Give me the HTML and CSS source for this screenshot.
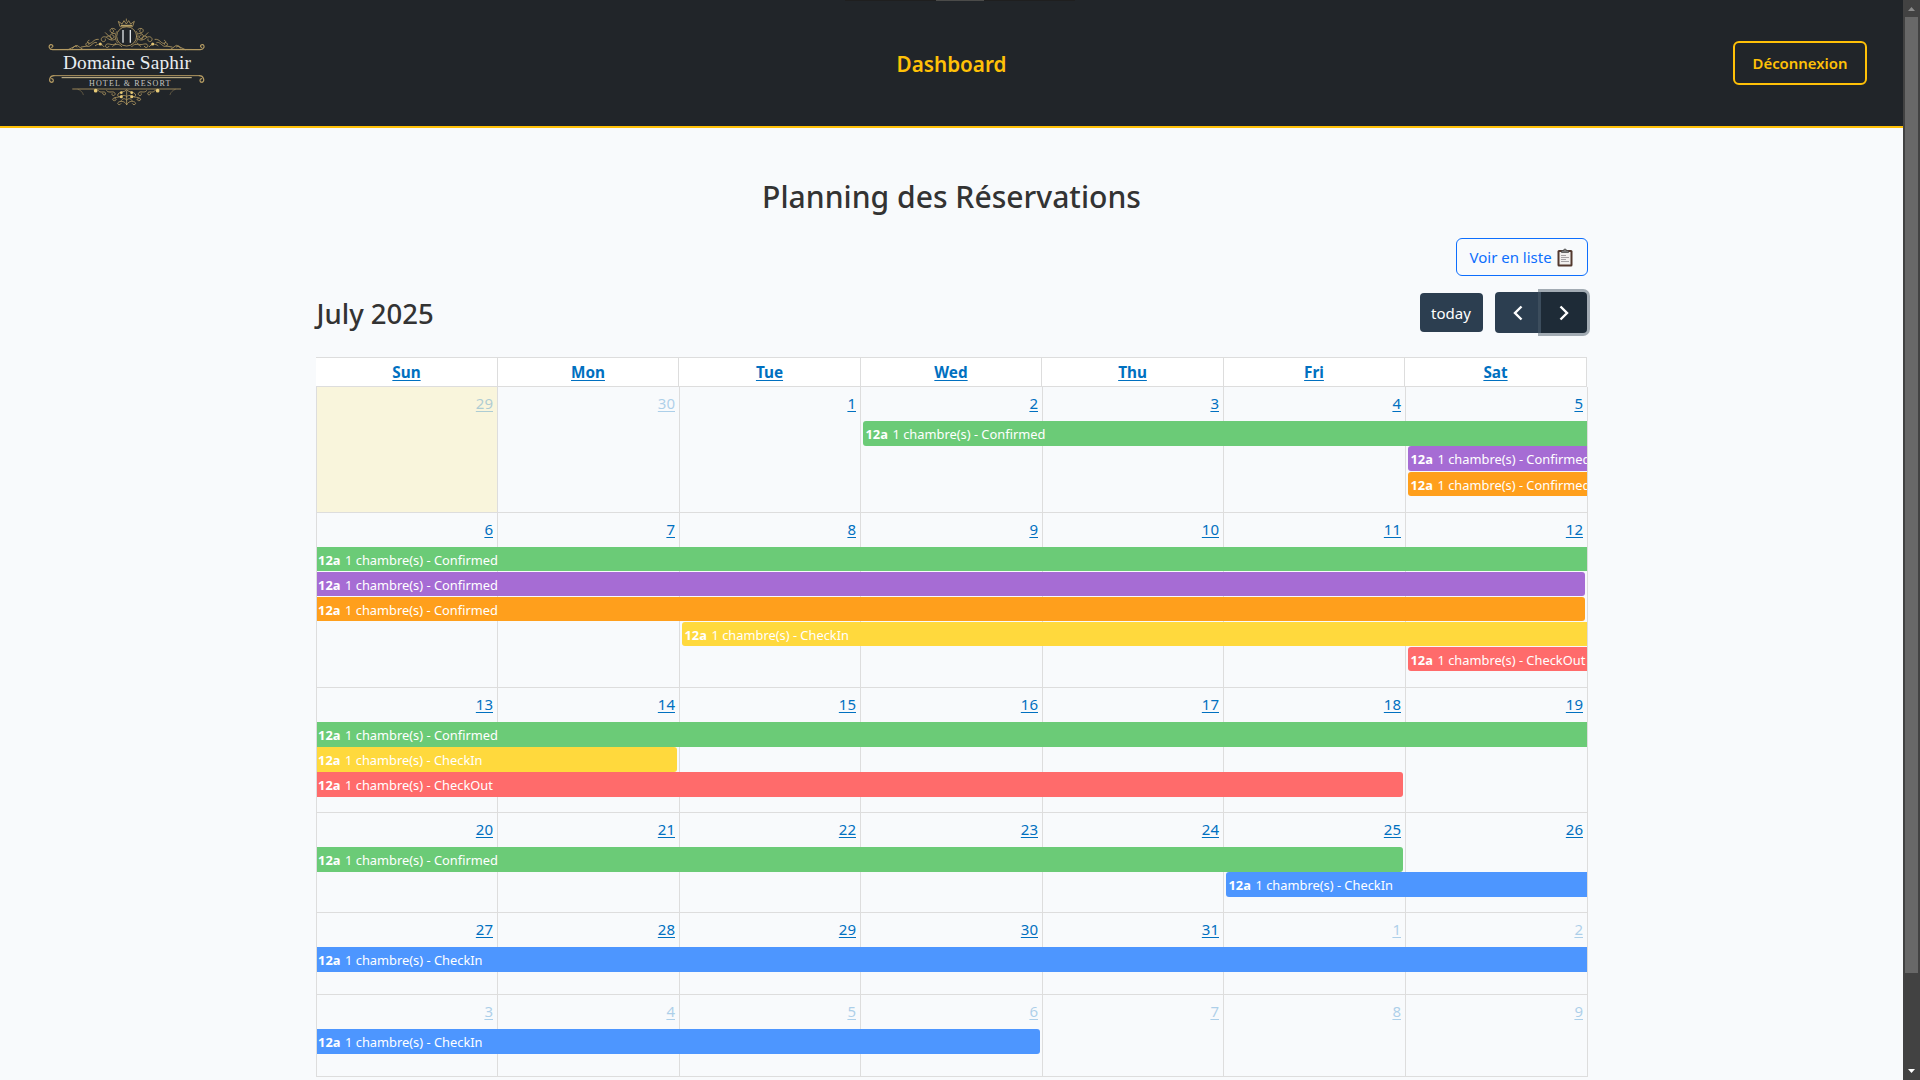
FILE: index.html
```html
<!DOCTYPE html>
<html lang="fr">
<head>
<meta charset="utf-8">
<title>Planning des Réservations</title>
<link rel="stylesheet" href="styles.css">
</head>
<body>
<div class="page">
  <header class="topbar">
    <svg class="logo" viewBox="54 54 474 270" fill="none" stroke="#b39a62" stroke-width="3" stroke-linecap="round" role="img" aria-label="Domaine Saphir">
      <!-- crown and medallion -->
      <path d="M270 79 265 64l11 8 6-10 7 10 7-10 6 10 11-8-5 15z" stroke-width="2.5"/>
      <path d="M274 76h31" stroke="#d9bd74" stroke-width="3"/>
      <path d="M289 57v6" stroke-width="2.5"/>
      <ellipse cx="290" cy="109" rx="30" ry="29" stroke-width="2.5"/>
      <path d="M261 94c-8 10-7 24 2 35M319 94c8 10 7 24-2 35" stroke-width="2"/>
      <path d="M279 90v38M301 90v38" stroke="#dfe3e6" stroke-width="4" stroke-linecap="butt"/>
      <!-- upper scrollwork -->
      <g>
        <path d="M256 88c-10-8-21 1-13 9 8 3 11-6 5-8M254 100c-14-2-19 12-9 16 9 0 9-11 2-11M226 98l10 10M230 110c8-5 16 0 14 8M257 116c-8 8-20 3-25-2-11-9-22 0-17 8 5 6 14 2 11-5" stroke-width="2.5"/>
        <path d="M258 130c-10 10-21-2-29 3-8 8 5 14 8 6M248 139c8-9 20-8 27 1M205 118c-14-2-17 12-26 12-8 0-8-8-2-9M200 128c-8-5-15 9-23 11-9 1-12-6-7-10s10 2 6 5M222 140c-6-9-18-10-26-3M172 138l-18 3" stroke-width="2.5"/>
        <circle cx="211" cy="132" r="4.500" fill="#e3c576" stroke="none"/>
        <path d="M276 148 68 149c-11 0-14-12-6-15 7-1 9 7 3 8" stroke-width="3.500"/>
        <path d="M114 149l27-13 17 12M128 145l7-8 6 4" stroke-width="2.500"/>
      </g>
      <g>
        <path d="M324 88c10-8 21 1 13 9-8 3-11-6-5-8M326 100c14-2 19 12 9 16-9 0-9-11-2-11M354 98l-10 10M350 110c-8-5-16 0-14 8M323 116c8 8 20 3 25-2 11-9 22 0 17 8-5 6-14 2-11-5" stroke-width="2.5"/>
        <path d="M322 130c10 10 21-2 29 3 8 8-5 14-8 6M332 139c-8-9-20-8-27 1M375 118c14-2 17 12 26 12 8 0 8-8 2-9M380 128c8-5 15 9 23 11 9 1 12-6 7-10s-10 2-6 5M358 140c6-9 18-10 26-3M408 138l18 3" stroke-width="2.5"/>
        <circle cx="368" cy="132" r="4.500" fill="#e3c576" stroke="none"/>
        <path d="M276 148 511 149c11 0 15-12 7-15-7-1-9 7-3 8" stroke-width="3.500"/>
        <path d="M466 149l-27-13-17 12M452 145l-7-8-6 4" stroke-width="2.500"/>
      </g>
      <text class="logo-name" x="99" y="206" textLength="384">Domaine Saphir</text>
      <!-- lower rules -->
      <path d="M72 227H508" stroke-width="3"/>
      <path d="M96 233H484" stroke="#d3c294" stroke-width="3"/>
      <path d="M72 227c-14 0-17 17-8 20 8 0 8-10 1-11M508 227c14 0 17 17 8 20-8 0-8-10-1-11" stroke-width="3.500"/>
      <text class="logo-sub" x="177" y="258" textLength="244">HOTEL &amp; RESORT</text>
      <path d="M128 267H452" stroke-width="2.500"/>
      <!-- lower scrollwork -->
      <path d="M144 268c8 3 14 8 16 16M436 268c-8 3-14 8-16 16" stroke-width="2" opacity=".6"/>
      <path d="M203 270c8 12 18 2 23 8 4 8-8 9-8 2M230 272c8 10 20-2 25 8 2 9-12 9-9 1M377 270c-8 12-18 2-23 8-4 8 8 9 8 2M350 272c-8 10-20-2-25 8-2 9 12 9 9 1" stroke-width="2.500"/>
      <path d="M290 270c-8 8-20 4-26 12-4 10 10 12 10 4M290 290c-8-10-20 2-30 2-14 0-15 11-6 10 8-2 4-8 0-6M290 314c-5-10-15-12-24-8-8 6 3 12 7 5M290 300c-7-8-14-3-17 3" stroke-width="2.500"/>
      <path d="M290 270c8 8 20 4 26 12 4 10-10 12-10 4M290 290c8-10 20 2 30 2 14 0 15 11 6 10-8-2-4-8 0-6M290 314c5-10 15-12 24-8 8 6-3 12-7 5M290 300c7-8 14-3 17 3M290 274v40" stroke-width="2.500"/>
      <g fill="#e9cc78" stroke="none"><circle cx="197" cy="272" r="5.500"/><circle cx="383" cy="272" r="5.500"/><circle cx="274" cy="278" r="4"/><circle cx="305" cy="278" r="4"/><circle cx="274" cy="290" r="4.500"/><circle cx="305" cy="290" r="4.500"/></g>
    </svg>
    <div class="brand">Dashboard</div>
    <a class="logout">Déconnexion</a>
  </header>

  <main class="content">
    <h1>Planning des Réservations</h1>
    <a class="list-btn">Voir en liste
      <svg width="16" height="19" viewBox="0 0 16 19"><rect x=".5" y="2" width="15" height="16.500" rx="1.500" fill="#53392f"/><rect x="2.500" y="4" width="11" height="12.500" fill="#f1efee"/><path d="M4.500 4.500V2.500H6.500a1.500 1.500 0 0 1 3 0h2v2z" fill="#777" stroke="#444" stroke-width=".7"/><path d="M4 7.500h5M4 9.500h8M4 11.500h5M4 13.500h8" stroke="#a5a2a5"/></svg>
    </a>

    <div class="toolbar">
      <h2>July 2025</h2>
      <div class="tools">
        <button class="btn today-btn">today</button>
        <div class="group">
          <button class="btn prev"><svg width="12" height="16" viewBox="0 0 12 16"><path d="M9.500 1.500 3 8l6.500 6.500"/></svg></button>
          <button class="btn next"><svg width="12" height="16" viewBox="0 0 12 16"><path d="M2.500 1.500 9 8l-6.500 6.500"/></svg></button>
        </div>
      </div>
    </div>

    <div class="calendar">
      <div class="weekdays"><div><a>Sun</a></div><div><a>Mon</a></div><div><a>Tue</a></div><div><a>Wed</a></div><div><a>Thu</a></div><div><a>Fri</a></div><div><a>Sat</a></div></div>

      <div class="week h126">
        <div class="day c1 other today"><a>29</a></div><div class="day c2 other"><a>30</a></div><div class="day c3"><a>1</a></div><div class="day c4"><a>2</a></div><div class="day c5"><a>3</a></div><div class="day c6"><a>4</a></div><div class="day c7"><a>5</a></div>
        <div class="event green from4 to7 r2 start"><b>12a</b>1 chambre(s) - Confirmed</div>
        <div class="event purple from7 to7 r3 start"><b>12a</b>1 chambre(s) - Confirmed</div>
        <div class="event orange from7 to7 r4 start gap-top"><b>12a</b>1 chambre(s) - Confirmed</div>
      </div>

      <div class="week h175 tight">
        <div class="day c1"><a>6</a></div><div class="day c2"><a>7</a></div><div class="day c3"><a>8</a></div><div class="day c4"><a>9</a></div><div class="day c5"><a>10</a></div><div class="day c6"><a>11</a></div><div class="day c7"><a>12</a></div>
        <div class="event green from1 to7 r2"><b>12a</b>1 chambre(s) - Confirmed</div>
        <div class="event purple from1 to7 r3 end"><b>12a</b>1 chambre(s) - Confirmed</div>
        <div class="event orange from1 to7 r4 end"><b>12a</b>1 chambre(s) - Confirmed</div>
        <div class="event yellow from3 to7 r5 start"><b>12a</b>1 chambre(s) - CheckIn</div>
        <div class="event red from7 to7 r6 start"><b>12a</b>1 chambre(s) - CheckOut</div>
      </div>

      <div class="week h125">
        <div class="day c1"><a>13</a></div><div class="day c2"><a>14</a></div><div class="day c3"><a>15</a></div><div class="day c4"><a>16</a></div><div class="day c5"><a>17</a></div><div class="day c6"><a>18</a></div><div class="day c7"><a>19</a></div>
        <div class="event green from1 to7 r2"><b>12a</b>1 chambre(s) - Confirmed</div>
        <div class="event yellow from1 to2 r3 end"><b>12a</b>1 chambre(s) - CheckIn</div>
        <div class="event red from1 to6 r4 end"><b>12a</b>1 chambre(s) - CheckOut</div>
      </div>

      <div class="week h100">
        <div class="day c1"><a>20</a></div><div class="day c2"><a>21</a></div><div class="day c3"><a>22</a></div><div class="day c4"><a>23</a></div><div class="day c5"><a>24</a></div><div class="day c6"><a>25</a></div><div class="day c7"><a>26</a></div>
        <div class="event green from1 to6 r2 end"><b>12a</b>1 chambre(s) - Confirmed</div>
        <div class="event blue from6 to7 r3 start"><b>12a</b>1 chambre(s) - CheckIn</div>
      </div>

      <div class="week h82">
        <div class="day c1"><a>27</a></div><div class="day c2"><a>28</a></div><div class="day c3"><a>29</a></div><div class="day c4"><a>30</a></div><div class="day c5"><a>31</a></div><div class="day c6 other"><a>1</a></div><div class="day c7 other"><a>2</a></div>
        <div class="event blue from1 to7 r2"><b>12a</b>1 chambre(s) - CheckIn</div>
      </div>

      <div class="week h82">
        <div class="day c1 other"><a>3</a></div><div class="day c2 other"><a>4</a></div><div class="day c3 other"><a>5</a></div><div class="day c4 other"><a>6</a></div><div class="day c5 other"><a>7</a></div><div class="day c6 other"><a>8</a></div><div class="day c7 other"><a>9</a></div>
        <div class="event blue from1 to4 r2 end"><b>12a</b>1 chambre(s) - CheckIn</div>
      </div>
    </div>
  </main>
</div>

<div class="scrollbar">
  <svg class="arrow" width="17" height="17"><path d="M5 11h7L8.500 7z" fill="#8b8b8b"/></svg>
  <div class="thumb"></div>
  <svg class="arrow" width="17" height="17"><path d="M5 6h7l-3.500 4z" fill="#fff"/></svg>
</div>
<div class="top-edge"><i></i></div>
</body>
</html>
```
FILE: styles.css
```css
* { box-sizing: border-box; }

body {
  margin: 0;
  width: 1920px;
  height: 1080px;
  overflow: hidden;
  display: flex;
  background: #f8fafc;
  color: #333;
  font: 15px/24px "Noto Sans", "Open Sans", sans-serif;
}

.page { flex: 1; min-width: 0; }

/* Top bar */
.topbar {
  height: 128px;
  display: grid;
  grid-template-columns: 1fr auto 1fr;
  align-items: center;
  padding: 0 36px 0 48px;
  background: #212529;
  border-bottom: 2px solid #ffc107;
}
.logo { width: 158px; height: 90px; }
.logo-name, .logo-sub { stroke: none; font-family: "Liberation Serif", serif; }
.logo-name { fill: #e9edf1; font-size: 58px; }
.logo-sub { fill: #c6c5c2; font-size: 24px; }
.brand {
  color: #ffc107;
  font-size: 20.7px;
  font-weight: 600;
  margin-right: 12px;
  padding-top: 2px;
}
.logout {
  justify-self: end;
  width: 134px;
  height: 44px;
  border: 2px solid #ffc107;
  border-radius: 6px;
  color: #ffc107;
  font-size: 14.9px;
  font-weight: 600;
  line-height: 40px;
  text-align: center;
}

/* Main column */
.content {
  width: 1272px;
  margin: 0 auto;
  padding-top: 50px;
  display: flex;
  flex-direction: column;
}
h1 {
  margin: 0 0 22px;
  font-size: 30.1px;
  font-weight: 500;
  line-height: 38px;
  text-align: center;
}
.list-btn {
  align-self: flex-end;
  display: flex;
  align-items: center;
  justify-content: space-between;
  width: 132px;
  height: 38px;
  padding: 0 14px 0 13px;
  border: 1px solid #0d6efd;
  border-radius: 6px;
  color: #0d6efd;
  white-space: nowrap;
}

/* Calendar toolbar */
.toolbar {
  display: flex;
  align-items: center;
  justify-content: space-between;
  height: 41px;
  margin: 16px 1px 24px 0;
}
h2 {
  margin: 0;
  padding: 2px 0 0 1px;
  font-size: 27.5px;
  font-weight: 500;
  line-height: 40px;
}
.tools { display: flex; align-items: center; gap: 12px; }
.group { display: flex; }
.btn {
  display: flex;
  align-items: center;
  justify-content: center;
  height: 41px;
  width: 46px;
  padding: 0;
  border: 0;
  border-radius: 4px;
  background: #2c3e50;
  color: #fff;
  font: inherit;
}
.btn path { fill: none; stroke: #fff; stroke-width: 2.4; }
.today-btn { width: 63px; height: 39px; }
.prev { border-radius: 4px 0 0 4px; }
.next {
  border-radius: 0 4px 4px 0;
  background: #1e2b37;
  box-shadow: 0 0 0 3px rgba(76, 91, 106, .5);
}

/* Calendar grid */
.weekdays {
  display: grid;
  grid-template-columns: 182px 181px 182px 181px 182px 181px 182px;
  width: 1271px;
  height: 30px;
  background: #fff;
  border: solid #ddd;
  border-width: 1px 0;
}
.weekdays div {
  border-right: 1px solid #ddd;
  padding-left: 1px;
  text-align: center;
  line-height: 28px;
  font-size: 15.3px;
  font-weight: 700;
}
.weekdays a, .day a {
  color: #0070c0;
  text-decoration: underline;
  text-underline-offset: 2px;
  text-decoration-thickness: 1px;
}
.week {
  display: grid;
  grid-template-columns: 181px 182px 181px 182px 181px 182px 182px;
  grid-template-rows: 34px repeat(var(--rows), 25px) 1fr;
  border: solid #ddd;
  border-width: 0 0 1px 1px;
}
.h126 { --rows: 3; height: 126px; }
.h175 { --rows: 5; height: 175px; }
.h125 { --rows: 3; height: 125px; }
.h100 { --rows: 2; height: 100px; }
.h82 { --rows: 1; height: 82px; }

.day {
  grid-row: 1 / -1;
  border-right: 1px solid #ddd;
  padding-right: 3.5px;
  text-align: right;
  line-height: 32px;
}
.c1 { grid-column: 1; }
.c2 { grid-column: 2; }
.c3 { grid-column: 3; }
.c4 { grid-column: 4; }
.c5 { grid-column: 5; }
.c6 { grid-column: 6; }
.c7 { grid-column: 7; }
.other a { opacity: .3; }
.today { background: rgba(255, 220, 40, .15); }

/* Reservations */
.event {
  z-index: 1;
  margin-right: 1px;
  padding: 1px 0 0 1.6px;
  overflow: hidden;
  color: #fff;
  font-size: 12.85px;
  line-height: 24px;
  white-space: nowrap;
}
.event b { margin-right: 4.6px; }
.start { margin-left: 2px; padding-left: 3px; border-radius: 3px 0 0 3px; }
.end { margin-right: 3px; border-radius: 0 3px 3px 0; }
.tight .event { margin-bottom: 1px; }
.gap-top { margin-top: 1px; }
.r2 { grid-row: 2; }
.r3 { grid-row: 3; }
.r4 { grid-row: 4; }
.r5 { grid-row: 5; }
.r6 { grid-row: 6; }
.from1 { grid-column-start: 1; }
.from3 { grid-column-start: 3; }
.from4 { grid-column-start: 4; }
.from6 { grid-column-start: 6; }
.from7 { grid-column-start: 7; }
.to2 { grid-column-end: 3; }
.to4 { grid-column-end: 5; }
.to6 { grid-column-end: 7; }
.to7 { grid-column-end: 8; }
.green { background: #6bcb77; }
.purple { background: #a66cd4; }
.orange { background: #ff9f1c; }
.yellow { background: #ffd93d; }
.red { background: #ff6b6b; }
.blue { background: #4d96ff; }

/* Window scrollbar */
.scrollbar {
  width: 17px;
  height: 1080px;
  display: flex;
  flex-direction: column;
  background: #424242;
}
.arrow { display: block; }
.scrollbar .arrow:last-child { margin-top: auto; }
.thumb { height: 956px; margin: 0 2px; background: #686868; }

/* Window handle over the top edge */
.top-edge {
  position: absolute;
  top: 0;
  left: 845px;
  width: 230px;
  height: 1px;
  display: flex;
  justify-content: center;
  background: #1f1f1f;
}
.top-edge i { width: 48px; background: #4b4b49; }
```
